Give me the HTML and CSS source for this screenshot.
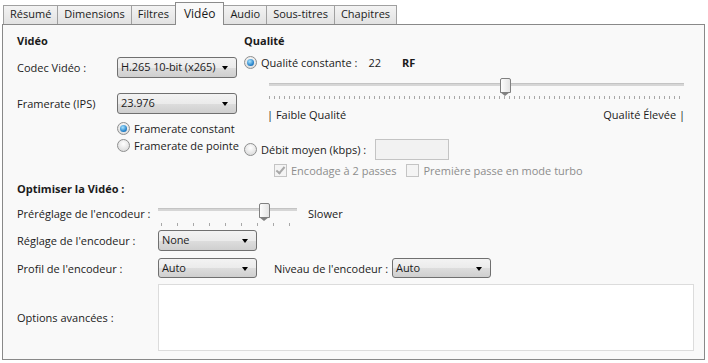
FILE: index.html
```html
<!DOCTYPE html>
<html lang="fr">
<head>
    <meta charset="UTF-8">
    <title>Vidéo</title>
    <link rel="stylesheet" href="styles.css">
</head>
<body>
    <div class="tabs">
        <div class="tab">Résumé</div>
        <div class="tab">Dimensions</div>
        <div class="tab">Filtres</div>
        <div class="tab active">Vidéo</div>
        <div class="tab">Audio</div>
        <div class="tab">Sous-titres</div>
        <div class="tab">Chapitres</div>
    </div>

    <div class="panel">
        <div class="top">
            <div class="col-video">
                <div class="heading">Vidéo</div>
                <div class="row row-codec">
                    <span class="label w100">Codec Vidéo :</span>
                    <div class="select w120">H.265 10-bit (x265)</div>
                </div>
                <div class="row row-fps">
                    <span class="label w100">Framerate (IPS)</span>
                    <div class="select w120">23.976</div>
                </div>
                <div class="radios">
                    <div class="option"><span class="radio checked"></span>Framerate constant</div>
                    <div class="option"><span class="radio"></span>Framerate de pointe</div>
                </div>
            </div>

            <div class="col-quality">
                <div class="heading">Qualité</div>
                <div class="option rf-row">
                    <span class="radio checked"></span>Qualité constante :
                    <span class="rf-value">22</span>
                    <b>RF</b>
                </div>
                <div class="slider quality-slider">
                    <div class="track"></div>
                    <div class="thumb" style="left: 231px"></div>
                    <div class="ticks"></div>
                </div>
                <div class="scale-labels">
                    <span>| Faible Qualité</span>
                    <span>Qualité Élevée |</span>
                </div>
                <div class="option bitrate-row">
                    <span class="radio"></span>Débit moyen (kbps) :
                    <div class="textbox"></div>
                </div>
                <div class="checks">
                    <span class="check checked"></span><span class="disabled">Encodage à 2 passes</span>
                    <span class="check"></span><span class="disabled">Première passe en mode turbo</span>
                </div>
            </div>
        </div>

        <div class="optimise">
            <div class="heading">Optimiser la Vidéo :</div>
            <div class="row row-preset">
                <span class="label w141">Préréglage de l'encodeur :</span>
                <div class="slider preset-slider">
                    <div class="track"></div>
                    <div class="thumb" style="left: 101px"></div>
                    <div class="ticks sparse"></div>
                </div>
                <span class="slower">Slower</span>
            </div>
            <div class="row row-tune">
                <span class="label w141">Réglage de l'encodeur :</span>
                <div class="select w99">None</div>
            </div>
            <div class="row row-profile">
                <span class="label w141">Profil de l'encodeur :</span>
                <div class="select w99">Auto</div>
                <span class="label level">Niveau de l'encodeur :</span>
                <div class="select w99">Auto</div>
            </div>
            <div class="row row-extra">
                <span class="label w141">Options avancées :</span>
                <div class="textarea"></div>
            </div>
        </div>
    </div>
</body>
</html>
```

FILE: styles.css
```css
body {
    margin: 0;
    background-color: #fff;
    font-family: "Open Sans", "Noto Sans", sans-serif;
    font-size: 11px;
    color: #1b1b1b;
}

.tabs {
    display: flex;
    align-items: flex-end;
    height: 24px;
    padding-left: 3px;
}

.tab {
    height: 18px;
    line-height: 16px;
    padding: 0 6px;
    border: 1px solid #a0a0a0;
    border-bottom: none;
    border-right: none;
    background: linear-gradient(#f3f3f3, #e2e2e2);
}

.tab:last-child {
    border-right: 1px solid #a0a0a0;
}

.tab.active {
    height: 22px;
    line-height: 21px;
    padding: 0 8px;
    background: #f9f9f9;
    border: 1px solid #8b8b8b;
    border-bottom: none;
    margin-bottom: -1px;
    position: relative;
    z-index: 1;
    font-size: 12px;
}

.tab.active + .tab {
    border-left: none;
}

.panel {
    margin: 0 3px 0 2px;
    height: 334px;
    border: 1px solid #898989;
    background-color: #f9f9f9;
    padding: 0 0 0 14px;
}

.heading {
    font-weight: bold;
    height: 15px;
    line-height: 15px;
    margin-top: 8px;
}

.top {
    display: flex;
}

.col-video {
    width: 227px;
}

.row {
    display: flex;
    align-items: center;
}

.label {
    flex: none;
}

.w100 { width: 100px; }
.w141 { width: 141px; }

.select {
    box-sizing: border-box;
    height: 21px;
    line-height: 18px;
    padding-left: 3px;
    border: 1px solid #707070;
    border-radius: 3px;
    background: linear-gradient(#f3f3f3 0%, #ebebeb 50%, #dddddd 51%, #cfcfcf 100%);
    position: relative;
    flex: none;
    letter-spacing: -0.1px;
}

.select::after {
    content: "";
    position: absolute;
    right: 8px;
    top: 8px;
    border-left: 3.5px solid transparent;
    border-right: 3.5px solid transparent;
    border-top: 4px solid #000;
}

.w120 { width: 120px; }
.w99 { width: 99px; }

.row-codec { margin-top: 9px; }
.row-fps { margin-top: 15px; }

.radios { margin: 6px 0 0 100px; }

.option {
    display: flex;
    align-items: center;
    height: 17px;
}

.radio {
    box-sizing: border-box;
    width: 13px;
    height: 13px;
    border-radius: 50%;
    border: 1px solid #8e8f8f;
    background: radial-gradient(circle at 50% 35%, #fff, #d4d4d4);
    margin-right: 4px;
    flex: none;
    position: relative;
}

.radio.checked::after {
    content: "";
    position: absolute;
    left: 2px;
    top: 2px;
    width: 7px;
    height: 7px;
    border-radius: 50%;
    background: radial-gradient(circle at 40% 35%, #a9e4ff, #1a79c4 70%, #0d4f91);
}

.col-quality {
    width: 445px;
}

.rf-row { margin-top: 6px; }
.rf-value { margin-left: 11px; }
.rf-row b { margin-left: 21px; }

.slider {
    position: relative;
    height: 22px;
}

.quality-slider {
    margin: 7px 0 0 25px;
    width: 415px;
}

.track {
    position: absolute;
    left: 0;
    right: 0;
    top: 5px;
    height: 2px;
    background: #d6d6d6;
    border-top: 1px solid #c4c4c4;
}

.thumb {
    position: absolute;
    top: 0;
    width: 9px;
    height: 13px;
    border: 1px solid #808080;
    border-radius: 2px 2px 0 0;
    background: linear-gradient(to right, #fdfdfd, #e4e4e4);
}

.thumb::after {
    content: "";
    position: absolute;
    left: -1px;
    top: 13px;
    border-left: 5.5px solid transparent;
    border-right: 5.5px solid transparent;
    border-top: 4px solid #808080;
}

.ticks {
    position: absolute;
    left: 0;
    right: 0;
    top: 18px;
    height: 3px;
    background: repeating-linear-gradient(to right, #a8a8a8 0 1px, transparent 1px 5px);
}

.ticks.sparse {
    left: 3px;
    top: 20px;
    background: repeating-linear-gradient(to right, #a8a8a8 0 1px, transparent 1px 16px);
}

.scale-labels {
    display: flex;
    justify-content: space-between;
    width: 418px;
    margin: 7px 0 0 23px;
}

.bitrate-row { margin-top: 19px; }

.textbox {
    box-sizing: border-box;
    width: 74px;
    height: 21px;
    margin-left: 9px;
    border: 1px solid #c4c4c4;
    background: #f2f2f2;
}

.checks {
    display: flex;
    align-items: center;
    margin: 4px 0 0 30px;
    height: 17px;
}

.check {
    box-sizing: border-box;
    width: 13px;
    height: 13px;
    border: 1px solid #c4c4c4;
    background: #f4f4f4;
    margin-right: 4px;
    position: relative;
}

.check.checked::after {
    content: "";
    position: absolute;
    left: 3px;
    top: 0;
    width: 3px;
    height: 7px;
    border: solid #a8a8a8;
    border-width: 0 2px 2px 0;
    transform: rotate(40deg);
}

.disabled {
    color: #8d8d8d;
    margin-right: 10px;
}

.optimise .heading { margin-top: 2px; }

.row-preset {
    margin-top: 6px;
    height: 22px;
}

.preset-slider {
    width: 139px;
    margin-top: 2px;
}

.slower { margin-left: 11px; }

.row-tune { margin-top: 6px; }
.row-profile { margin-top: 7px; height: 20px; }
.row-profile .select { height: 20px; }

.level { margin: 0 4px 0 17px; }

.row-extra {
    margin-top: 6px;
}

.textarea {
    box-sizing: border-box;
    width: 536px;
    height: 67px;
    border: 1px solid #dcdcdc;
    background: #fff;
}
```
